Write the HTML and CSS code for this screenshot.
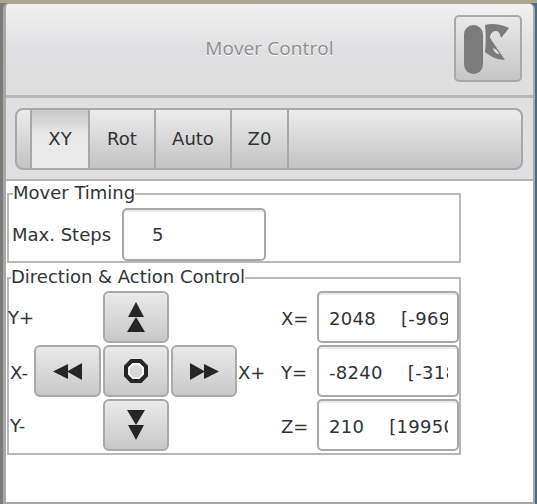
FILE: index.html
```html
<!DOCTYPE html>
<html lang="en">
<head>
<meta charset="utf-8">
<title>Mover Control</title>
<link rel="stylesheet" href="styles.css">
</head>
<body>
<div class="window">
  <header class="titlebar">
    <div class="title">Mover Control</div>
    <button class="menu-btn" aria-label="Menu">
      <svg class="menu-icon" width="46" height="52" viewBox="0 -2 46 52">
        <rect x="0" y="0" width="19" height="49" rx="9.500" fill="#7b7b7b"/>
        <path d="M21 0 C28 -2 37 -1 45 3 C43 6 40 9 37 13 C36 9 35 6 32 6 C28 6 26 9 26 13 L41 35 C34 35 27 32 21 27 C22 18 22 9 21 0 Z" fill="#7b7b7b"/>
        <path d="M29 23 C32 24 34 26 35.500 29 C32 29 30 27 29 23 Z" fill="#dcdcdd"/>
      </svg>
    </button>
  </header>
  <div class="tabstrip">
    <nav class="tabs">
      <div class="tab-cap"></div>
      <div class="tab tab-active">XY</div>
      <div class="tab tab-rot">Rot</div>
      <div class="tab tab-auto">Auto</div>
      <div class="tab tab-z0">Z0</div>
      <div class="tab-rest"></div>
    </nav>
  </div>
  <main class="content">
    <fieldset class="group group-timing">
      <legend>Mover Timing</legend>
      <div class="timing-row">
        <label class="steps-label">Max. Steps</label>
        <div class="field steps-field">5</div>
      </div>
    </fieldset>
    <fieldset class="group group-direction">
      <legend>Direction &amp; Action Control</legend>
      <div class="control-grid">
        <span class="axis axis-yp">Y+</span>
        <button class="pad pad-up" aria-label="Y plus">
          <svg width="18" height="30" viewBox="0 0 18 30"><path d="M9 0 L17 15 L1 15 Z M9 15 L18 30 L0 30 Z" fill="#262626"/></svg>
        </button>
        <span class="axis axis-xm">X-</span>
        <button class="pad pad-left" aria-label="X minus">
          <svg width="29" height="17" viewBox="0 0 29 17"><path d="M0 8.500 L15 1 L15 16 Z M14 8.500 L29 0 L29 17 Z" fill="#262626"/></svg>
        </button>
        <button class="pad pad-stop" aria-label="Stop">
          <svg width="24" height="24" viewBox="0 0 24 24"><path d="M7.500 2 H16.500 L22 7.500 V16.500 L16.500 22 H7.500 L2 16.500 V7.500 Z" fill="none" stroke="#262626" stroke-width="4"/><path d="M9 5 H15 L19 9 V15 L15 19 H9 L5 15 V9 Z" fill="none" stroke="#fff" stroke-width="1.500"/></svg>
        </button>
        <button class="pad pad-right" aria-label="X plus">
          <svg width="29" height="17" viewBox="0 0 29 17"><path d="M0 0 L15 8.500 L0 17 Z M14 1 L29 8.500 L14 16 Z" fill="#262626"/></svg>
        </button>
        <span class="axis axis-xp">X+</span>
        <span class="axis axis-ym">Y-</span>
        <button class="pad pad-down" aria-label="Y minus">
          <svg width="18" height="30" viewBox="0 0 18 30"><path d="M0 0 L18 0 L9 15 Z M1 15 L17 15 L9 30 Z" fill="#262626"/></svg>
        </button>
        <span class="coord coord-x">X=</span>
        <div class="field pos pos-x"><span class="pos-text"><span class="pos-value">2048</span>[-969</span></div>
        <span class="coord coord-y">Y=</span>
        <div class="field pos pos-y"><span class="pos-text"><span class="pos-value">-8240</span>[-318</span></div>
        <span class="coord coord-z">Z=</span>
        <div class="field pos pos-z"><span class="pos-text"><span class="pos-value">210</span>[19950</span></div>
      </div>
    </fieldset>
  </main>
</div>
</body>
</html>
```
FILE: styles.css
```css
* { box-sizing: border-box; }
html, body { margin: 0; height: 100%; }
body {
  background:
    linear-gradient(#aca592 0 3px, transparent 3px),
    linear-gradient(90deg, #7b7b77 50%, #4f6a86 50%);
  padding: 3px 2px 0 3px;
  font-family: "DejaVu Sans", sans-serif;
  font-size: 18px;
  color: #2e3436;
  overflow: hidden;
}
.window {
  height: 501px;
  width: 532px;
  border-style: solid;
  border-color: #a8a8a8;
  border-width: 1px 2px 2px 3px;
  border-radius: 6px 6px 0 0;
  background: #fff;
  display: flex;
  flex-direction: column;
  overflow: hidden;
}
.titlebar {
  height: 94px;
  flex: none;
  background: linear-gradient(#f1f1f2 0, #e0e0e2 50%, #dededf 100%);
  border-bottom: 3px solid #b8b8b8;
  display: flex;
  align-items: flex-start;
  justify-content: flex-end;
  position: relative;
  padding: 11px 11px 0 0;
}
.title {
  position: absolute;
  left: 0;
  right: 0;
  top: 31px;
  text-align: center;
  font-family: "Open Sans", sans-serif;
  font-size: 19px;
  letter-spacing: 0.1px;
  color: #8e8e8e;
  text-shadow: 0 1px 0 #fff;
}
.menu-btn {
  width: 68px;
  height: 67px;
  padding: 0;
  border: 2px solid #a9a9a9;
  border-radius: 5px;
  background: linear-gradient(#e9e9ea, #c6c6c6);
  display: flex;
  align-items: center;
  justify-content: flex-start;
}
.menu-icon { margin-left: 8px; }
.tabstrip {
  height: 83px;
  flex: none;
  background: #e0e0e2;
  border-bottom: 2px solid #b4b4b4;
  padding: 10px 10px 0 9px;
}
.tabs {
  height: 62px;
  display: flex;
  border: 2px solid #a8a8a8;
  border-radius: 8px;
  background: linear-gradient(#ececed, #c3c3c3);
  overflow: hidden;
}
.tab-cap { width: 15px; border-right: 2px solid #a8a8a8; }
.tab {
  display: flex;
  align-items: center;
  justify-content: center;
  padding-bottom: 2px;
  border-right: 2px solid #a8a8a8;
}
.tab-active {
  width: 58px;
  background: linear-gradient(#c9c9c9, #e6e6e7 40%, #ececed);
}
.tab-rot { width: 66px; }
.tab-auto { width: 76px; }
.tab-z0 { width: 57px; }
.tab-rest { flex: 1; }
.content {
  flex: 1;
  background: #fff;
  padding: 3px 0 0 1px;
  min-height: 0;
}
.group {
  margin: 0;
  width: 454px;
  padding: 0;
  border: 2px solid #b8b8b8;
}
.group legend {
  padding: 0 0 2px;
  line-height: 18px;
  color: #2e3436;
}
.group-timing { height: 79px; margin-bottom: 5px; }
.group-timing legend { margin-left: 4px; }
.group-direction { height: 187px; }
.group-direction legend { margin-left: 2px; }
.timing-row {
  display: flex;
  align-items: center;
  gap: 11px;
  padding: 4px 0 0 3px;
}
.field {
  background: #fff;
  border: 2px solid #a8a8a8;
  border-radius: 5px;
  box-shadow: inset 0 2px 0 #ececec;
  display: flex;
  align-items: center;
  color: #2e3436;
}
.steps-field {
  width: 144px;
  height: 53px;
  padding-left: 28px;
}
.control-grid {
  display: grid;
  grid-template-columns: 25px 67px 2px 66px 2px 66px 44px 36px 142px;
  grid-template-rows: 52px 52px 52px;
  row-gap: 2px;
  padding-top: 3px;
}
.pad {
  padding: 0;
  border: 2px solid #a9a9a9;
  border-radius: 6px;
  background: linear-gradient(#eaeaeb, #c8c8c8);
  display: flex;
  align-items: center;
  justify-content: center;
}
.axis, .coord { align-self: center; }
.coord { padding-top: 2px; }
.axis-yp { grid-area: 1 / 1; margin-left: -1px; }
.pad-up { grid-area: 1 / 4; }
.axis-xm { grid-area: 2 / 1; padding: 2px 0 0 1px; }
.pad-left { grid-area: 2 / 2; }
.pad-stop { grid-area: 2 / 4; }
.pad-right { grid-area: 2 / 6; }
.axis-xp { grid-area: 2 / 7; padding: 2px 0 0 1px; }
.axis-ym { grid-area: 3 / 1; padding-left: 1px; }
.pad-down { grid-area: 3 / 4; }
.coord-x { grid-area: 1 / 8; }
.coord-y { grid-area: 2 / 8; }
.coord-z { grid-area: 3 / 8; }
.pos-x { grid-area: 1 / 9; }
.pos-y { grid-area: 2 / 9; }
.pos-z { grid-area: 3 / 9; }
.pos { padding: 2px 9px 0 10px; overflow: hidden; letter-spacing: 0.3px; }
.pos-text { display: block; white-space: nowrap; overflow: hidden; width: 100%; }
.pos-value { margin-right: 25px; }
```
